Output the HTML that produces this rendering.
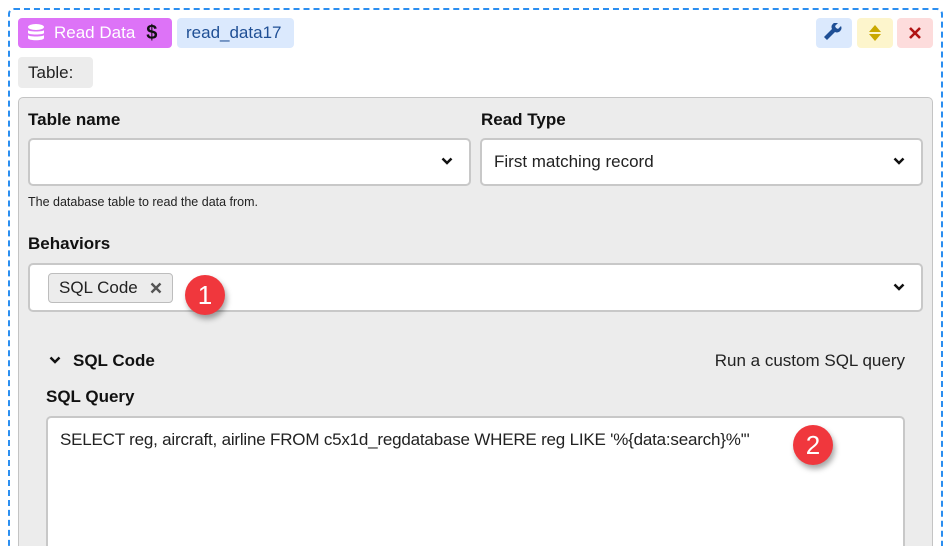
<!DOCTYPE html>
<html><head><style>
*{box-sizing:border-box}
html,body{margin:0;width:950px;height:546px;overflow:hidden;background:#fff}
body{font-family:"Liberation Sans",sans-serif}
#wrap{position:relative;width:950px;height:546px;overflow:hidden}
.dash{position:absolute;left:8px;top:8px;width:935px;height:538px;border:2px dashed #2b8ef0;border-bottom:none;border-radius:6px 6px 0 0}
.abs{position:absolute}
.pill{position:absolute;border-radius:4px;font-size:17px;display:flex;align-items:center}
.panel{position:absolute;left:18px;top:97px;width:915px;height:449px;background:#ececec;border:1px solid #c4c4c4;border-bottom:none;border-radius:5px 5px 0 0}
.lbl{position:absolute;font-weight:bold;font-size:17px;color:#111}
.inp{position:absolute;background:#fff;border:2px solid #c8c8c8;border-radius:5px;font-size:17px;color:#222;display:flex;align-items:center;padding-left:12px}
.chev{position:absolute;right:16px;top:50%;margin-top:-5px}
.badge{position:absolute;width:40px;height:40px;border-radius:50%;background:#f0373d;color:#fff;font-size:26px;display:flex;align-items:center;justify-content:center;box-shadow:2px 4px 6px rgba(0,0,0,.35)}
</style></head><body><div id="wrap">
<div class="dash"></div>
<div class="pill" style="left:18px;top:18px;width:154px;height:30px;background:#dd73f7;color:#fff;padding-left:8px">
<svg width="20" height="20" viewBox="0 0 20 20"><ellipse cx="10" cy="4" rx="8" ry="3" fill="#fff"/><path d="M2 7c0 2 16 2 16 0v3c0 2-16 2-16 0z M2 12c0 2 16 2 16 0v3c0 3-16 3-16 0z" fill="#fff"/></svg>
<span style="margin-left:8px">Read Data</span><span style="color:#111;font-weight:bold;margin-left:11px;font-size:20px">$</span></div>
<div class="pill" style="left:177px;top:18px;width:117px;height:30px;background:#dbe9fd;color:#1f4f95;padding-left:9px">read_data17</div>
<div class="pill" style="left:18px;top:57px;width:75px;height:31px;background:#ececec;color:#222;padding-left:10px">Table:</div>
<div class="pill" style="left:816px;top:18px;width:36px;height:30px;background:#dbe9fd;justify-content:center"><svg width="20" height="20" viewBox="0 0 20 20"><path d="M3 17l8-8a4.5 4.5 0 0 0 6-6l-3 3-2-1-1-2 3-3a4.5 4.5 0 0 0-6 6l-8 8z" fill="#1f4f95"/></svg></div>
<div class="pill" style="left:857px;top:18px;width:36px;height:30px;background:#fdf5cc;justify-content:center"><svg width="16" height="20" viewBox="0 0 16 20"><path d="M8 2l6 7H2z M2 11h12l-6 7z" fill="#c9a800"/></svg></div>
<div class="pill" style="left:897px;top:18px;width:36px;height:30px;background:#fddcdc;justify-content:center"><svg width="14" height="14" viewBox="0 0 14 14"><path d="M2 2l10 10M12 2L2 12" stroke="#b01313" stroke-width="2.6"/></svg></div>
<div class="panel"></div>
<div class="lbl" style="left:28px;top:110px">Table name</div>
<div class="lbl" style="left:481px;top:110px">Read Type</div>
<div class="inp" style="left:28px;top:138px;width:443px;height:48px"><svg class="chev" width="12" height="9" viewBox="0 0 12 9"><path d="M1.5 1.5l4.5 4.5 4.5-4.5" stroke="#111" stroke-width="2.5" fill="none"/></svg></div>
<div class="inp" style="left:480px;top:138px;width:443px;height:48px">First matching record<svg class="chev" width="12" height="9" viewBox="0 0 12 9"><path d="M1.5 1.5l4.5 4.5 4.5-4.5" stroke="#111" stroke-width="2.5" fill="none"/></svg></div>
<div class="abs" style="left:28px;top:195px;font-size:12.5px;color:#222">The database table to read the data from.</div>
<div class="lbl" style="left:28px;top:234px">Behaviors</div>
<div class="inp" style="left:28px;top:263px;width:895px;height:49px;padding-left:18px">
<div style="border:1px solid #bdbdbd;background:#ececec;border-radius:4px;height:30px;padding:0 10px;display:flex;align-items:center;color:#222">SQL Code<svg style="margin-left:12px" width="12" height="12" viewBox="0 0 12 12"><path d="M1.5 1.5l9 9M10.5 1.5l-9 9" stroke="#555" stroke-width="2.4"/></svg></div>
<svg class="chev" width="12" height="9" viewBox="0 0 12 9"><path d="M1.5 1.5l4.5 4.5 4.5-4.5" stroke="#111" stroke-width="2.5" fill="none"/></svg></div>
<div class="badge" style="left:185px;top:275px">1</div>
<svg class="abs" style="left:49px;top:356px" width="12" height="9" viewBox="0 0 12 9"><path d="M1.5 1.5l4.5 4.5 4.5-4.5" stroke="#111" stroke-width="2.5" fill="none"/></svg>
<div class="lbl" style="left:73px;top:351px">SQL Code</div>
<div class="abs" style="right:45px;top:351px;font-size:17px;color:#222">Run a custom SQL query</div>
<div class="lbl" style="left:46px;top:387px">SQL Query</div>
<div class="abs" style="left:46px;top:416px;width:859px;height:130px;background:#fff;border:2px solid #c8c8c8;border-bottom:none;border-radius:5px 5px 0 0;padding:12px 12px;font-size:17px;color:#222;white-space:nowrap;letter-spacing:-0.2px">SELECT reg, aircraft, airline FROM c5x1d_regdatabase WHERE reg LIKE '%{data:search}%'"</div>
<div class="badge" style="left:793px;top:425px">2</div>
</div></body></html>
